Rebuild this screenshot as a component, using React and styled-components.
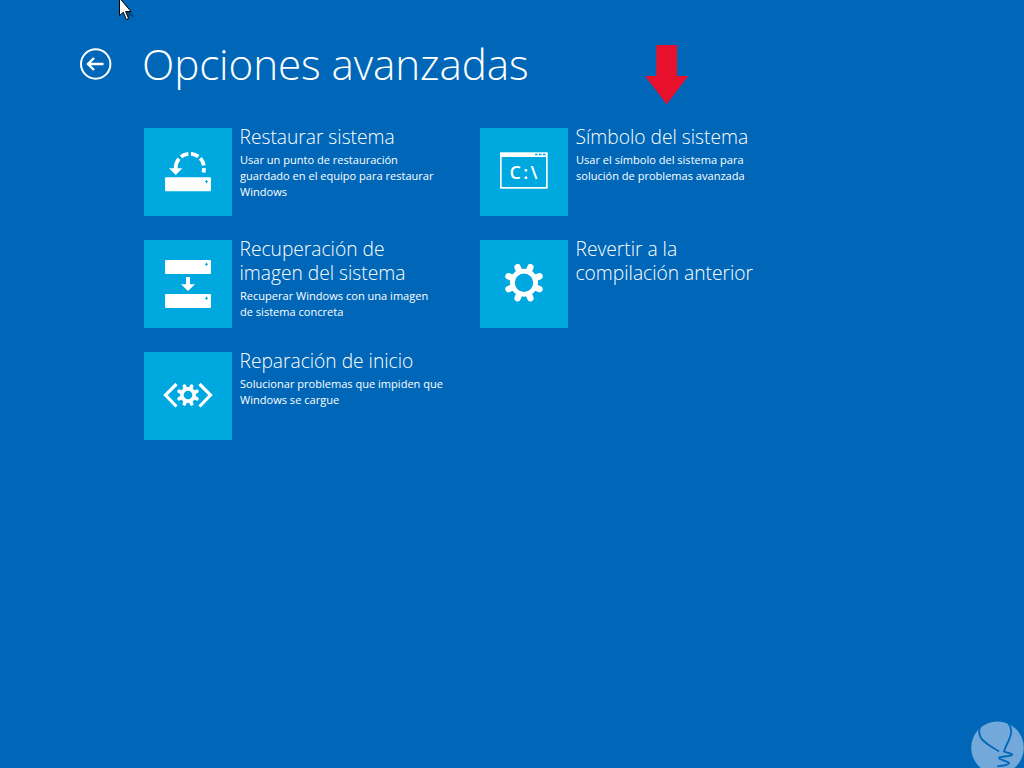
import React from "react";
import styled, { createGlobalStyle } from "styled-components";

const Global = createGlobalStyle`
  html, body { margin: 0; padding: 0; background: #0067b8; }
  * { box-sizing: border-box; }
`;

const Page = styled.div`
  position: relative;
  width: 1024px;
  height: 768px;
  overflow: hidden;
  background: #0067b8;
  color: #fff;
  font-family: "Open Sans", "Liberation Sans", sans-serif;
`;

const Header = styled.header`
  display: flex;
  align-items: center;
  gap: 30px;
  height: 128px;
  padding: 0 0 0 80px;
`;

const BackButton = styled.button`
  display: block;
  width: 32px;
  height: 32px;
  margin: 0 0 1px;
  padding: 0;
  border: 0;
  background: none;
`;

const Title = styled.h1`
  margin: 0;
  font-size: 42.2px;
  font-weight: 300;
  line-height: 56px;
  letter-spacing: -0.1px;
`;

const Options = styled.main`
  display: grid;
  grid-template-rows: repeat(3, 88px);
  grid-auto-flow: column;
  grid-auto-columns: 336px;
  row-gap: 24px;
  padding-left: 144px;
`;

const Option = styled.div`
  display: flex;
  gap: 8px;
`;

const Tile = styled.div`
  flex: 0 0 88px;
  height: 88px;
  background: #00a8e0;
`;

const Info = styled.div`
  width: 206px;
  margin-top: -3px;
`;

const Name = styled.div`
  margin-left: -0.5px;
  font-size: 19.2px;
  font-weight: 300;
  line-height: 24px;
  white-space: nowrap;
`;

const Desc = styled.div`
  font-size: 11.05px;
  line-height: 16px;
  margin-top: 3px;
  white-space: nowrap;
`;

const Overlay = styled.svg`
  position: absolute;
  left: ${(p) => p.$x}px;
  top: ${(p) => p.$y}px;
`;

const TileIcon = ({ children }) => (
  <svg width="88" height="88" viewBox="0 0 88 88">{children}</svg>
);

const TILE = "#00a8e0";

const Drive = ({ y }) => (
  <>
    <rect x="21" y={y} width="46" height="14" rx="1.2" fill="#fff" />
    <path d={`M61 ${y + 4.3}h3M62.5 ${y + 2.8}v3`} stroke={TILE} strokeWidth="1" />
  </>
);

const Gear = ({ cx, cy, outer, ring, hole, tooth }) => {
  const mid = (ring + hole) / 2;
  const teeth = Array.from({ length: 8 }, (_, i) => {
    const a = ((i * 45 + 22.5) * Math.PI) / 180;
    return (
      <line
        key={i}
        x1={cx + Math.cos(a) * hole}
        y1={cy + Math.sin(a) * hole}
        x2={cx + Math.cos(a) * (outer - tooth / 2)}
        y2={cy + Math.sin(a) * (outer - tooth / 2)}
        stroke="#fff"
        strokeWidth={tooth}
        strokeLinecap="round"
      />
    );
  });
  return (
    <>
      {teeth}
      <circle cx={cx} cy={cy} r={mid} fill={TILE} stroke="#fff" strokeWidth={ring - hole} />
    </>
  );
};

const RestoreIcon = () => (
  <TileIcon>
    <Drive y={49.3} />
    <path
      d="M59.3 44.5 A14.2 14.2 0 1 0 31.7 41"
      fill="none"
      stroke="#fff"
      strokeWidth="3.8"
      strokeDasharray="4.5 2.6 8 2.6 8 2.6 8 2.6 14"
    />
    <path d="M25 40.3h13.4L31.7 47z" fill="#fff" />
  </TileIcon>
);

const ImageIcon = () => (
  <TileIcon>
    <Drive y={20} />
    <path d="M42 37h4v7.3h5L44 51l-7-6.7h5z" fill="#fff" />
    <Drive y={54} />
  </TileIcon>
);

const RepairIcon = () => (
  <TileIcon>
    <path
      d="M32.5 32 21.5 43l11 11.5M55.5 32l11 11-11 11.5"
      fill="none"
      stroke="#fff"
      strokeWidth="3.2"
    />
    <Gear cx={44} cy={43} outer={11.5} ring={8} hole={4.3} tooth={3.6} />
  </TileIcon>
);

const ConsoleText = styled.text`
  font-family: "Open Sans", sans-serif;
  font-size: 18px;
  font-weight: 600;
  fill: #fff;
`;

const ConsoleIcon = () => (
  <TileIcon>
    <rect x="20" y="24.3" width="47.7" height="36.4" fill="#fff" />
    <rect x="21.7" y="29" width="44.3" height="30" fill={TILE} />
    <path d="M55 26.5h2.6M59 26.5h2.6M63 26.5h2.6" stroke={TILE} strokeWidth="1.6" />
    <ConsoleText x="29.5" y="51" textLength="28">C:\</ConsoleText>
  </TileIcon>
);

const GearIcon = () => (
  <TileIcon>
    <Gear cx={44} cy={42.7} outer={20} ring={14} hole={9.2} tooth={6.4} />
  </TileIcon>
);

const items = [
  {
    icon: <RestoreIcon />,
    name: ["Restaurar sistema"],
    desc: ["Usar un punto de restauración", "guardado en el equipo para restaurar", "Windows"],
  },
  {
    icon: <ImageIcon />,
    name: ["Recuperación de", "imagen del sistema"],
    desc: ["Recuperar Windows con una imagen", "de sistema concreta"],
  },
  {
    icon: <RepairIcon />,
    name: ["Reparación de inicio"],
    desc: ["Solucionar problemas que impiden que", "Windows se cargue"],
  },
  {
    icon: <ConsoleIcon />,
    name: ["Símbolo del sistema"],
    desc: ["Usar el símbolo del sistema para", "solución de problemas avanzada"],
  },
  {
    icon: <GearIcon />,
    name: ["Revertir a la", "compilación anterior"],
    desc: [],
  },
];

const Lines = ({ lines }) =>
  lines.map((l, i) => (
    <React.Fragment key={l}>
      {i > 0 && <br />}
      {l}
    </React.Fragment>
  ));

export default function App() {
  return (
    <Page>
      <Global />
      <Header>
        <BackButton aria-label="Atrás">
          <svg width="32" height="32" viewBox="0 0 32 32">
            <circle cx="15.7" cy="16" r="14.7" fill="none" stroke="#fff" strokeWidth="2" />
            <path
              d="M8 16h15.5M14 10l-6 6 6 6"
              fill="none"
              stroke="#fff"
              strokeWidth="2.4"
            />
          </svg>
        </BackButton>
        <Title>Opciones avanzadas</Title>
      </Header>
      <Options>
        {items.map((it) => (
          <Option key={it.name[0]}>
            <Tile>{it.icon}</Tile>
            <Info>
              <Name><Lines lines={it.name} /></Name>
              {it.desc.length > 0 && <Desc><Lines lines={it.desc} /></Desc>}
            </Info>
          </Option>
        ))}
      </Options>

      <Overlay $x={645} $y={45} width="44" height="60" viewBox="0 0 44 60">
        <path d="M11.3 0H32v31h11.3L21.7 59.3 0 31h11.3z" fill="#e8112d" />
      </Overlay>

      <Overlay $x={117} $y={0} width="18" height="24" viewBox="0 0 18 24">
        <path d="M4.5 3 10.5 21l2.5-5 5 1z" fill="#000" opacity="0.3" />
        <path
          d="M2.5 -2V15.5L6.3 12.2 9.3 19.5 11.6 18.5 8.6 11.5H14z"
          fill="#fff"
          stroke="#000"
          strokeWidth="1"
        />
      </Overlay>

      <Overlay $x={970} $y={712} width="54" height="56" viewBox="0 0 54 56">
        <circle cx="27.5" cy="35.7" r="26.3" fill="#72a9da" />
        <path
          d="M29 39.5C24 36 17 33 12.3 27.7 8 23 7.5 13 15.7 7.7 22 4 33 5 38.5 11.5 43 17 41 24 38.5 29 36.5 33 35 36 34 39.5 37 41 42 41 42.3 42.7 40 45 30 44 29 46 29 48 38 49 39 51 38 53 31 54 27.3 54.3"
          fill="none"
          stroke="#0067b8"
          strokeWidth="1.8"
        />
      </Overlay>
    </Page>
  );
}
